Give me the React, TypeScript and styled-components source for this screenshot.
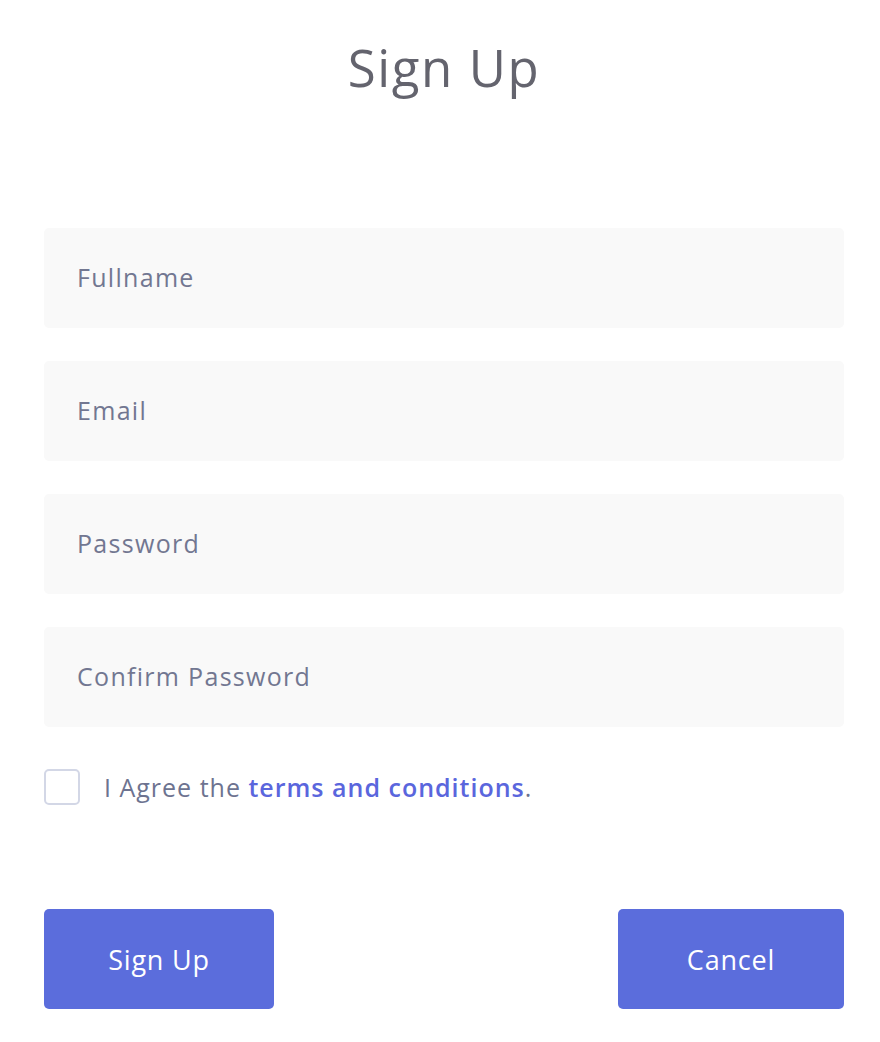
import React from "react";
import styled, { createGlobalStyle } from "styled-components";

const Global = createGlobalStyle`
  html, body { margin: 0; padding: 0; background: #ffffff; }
  body { font-family: "Open Sans", "Noto Sans", sans-serif; }
  * { box-sizing: border-box; }
`;

const FONT = `"Open Sans", "Noto Sans", sans-serif`;

const Page = styled.div`
  width: 880px;
  min-height: 1042px;
  padding: 32px 36px 0 44px;
  display: flex;
  flex-direction: column;
`;

const Title = styled.h1`
  margin: 0;
  text-align: center;
  font-family: ${FONT};
  font-weight: 400;
  font-size: 51px;
  line-height: 70px;
  letter-spacing: 1.6px;
  color: #64646e;
`;

const Form = styled.form`
  margin-top: 126px;
  display: flex;
  flex-direction: column;
  gap: 33px;
`;

const Field = styled.input`
  width: 800px;
  height: 100px;
  border: none;
  border-radius: 5px;
  background: #f9f9f9;
  padding: 0 33px 3px;
  font-family: ${FONT};
  font-size: 25px;
  letter-spacing: 1.3px;
  color: #727791;
  outline: none;
  &::placeholder { color: #727791; }
`;

const AgreeRow = styled.label`
  margin-top: 42px;
  display: flex;
  align-items: center;
  gap: 24px;
  font-family: ${FONT};
  font-size: 25px;
  letter-spacing: 1px;
  color: #6d7390;
`;

const Box = styled.span`
  width: 36px;
  height: 36px;
  flex: none;
  border: 2px solid #d3d7e6;
  border-radius: 5px;
  background: #fff;
`;

const Link = styled.a`
  color: #5a66dd;
  font-weight: 600;
  text-decoration: none;
`;

const Actions = styled.div`
  margin-top: 104px;
  width: 800px;
  display: flex;
  justify-content: space-between;
`;

const Button = styled.button<{ $w: number }>`
  width: ${(p) => p.$w}px;
  height: 100px;
  border: none;
  border-radius: 5px;
  background: #5b6ddc;
  color: #ffffff;
  font-family: ${FONT};
  font-size: 27px;
  letter-spacing: 0.8px;
  cursor: pointer;
`;

export default function App() {
  return (
    <Page>
      <Global />
      <Title>Sign Up</Title>
      <Form onSubmit={(e) => e.preventDefault()}>
        <Field placeholder="Fullname" />
        <Field placeholder="Email" />
        <Field placeholder="Password" type="password" />
        <Field placeholder="Confirm Password" type="password" />
      </Form>
      <AgreeRow>
        <Box />
        <span>
          I Agree the <Link href="#">terms and conditions</Link>.
        </span>
      </AgreeRow>
      <Actions>
        <Button $w={230}>Sign Up</Button>
        <Button $w={226}>Cancel</Button>
      </Actions>
    </Page>
  );
}
